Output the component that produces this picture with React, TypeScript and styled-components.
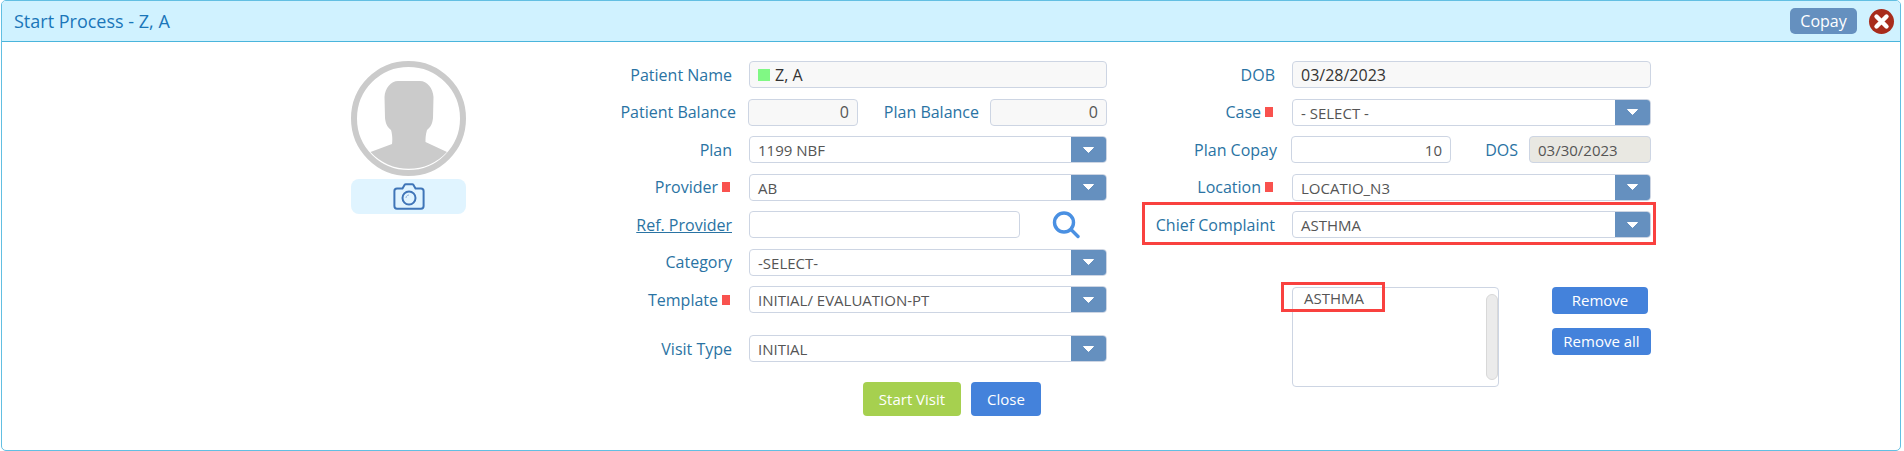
import React from "react";
import styled, { createGlobalStyle } from "styled-components";

const GlobalStyle = createGlobalStyle`
  html, body {
    margin: 0;
    padding: 0;
    background: #fff;
    font-family: "Open Sans", "Noto Sans", sans-serif;
    font-size: 14px;
  }
`;

function Dropdown({ value }: { value: string }) {
  return (
    <SelectBox>
      <SelectValue>{value}</SelectValue>
      <SelectArrow>
        <svg width="11" height="6" viewBox="0 0 11 6">
          <path d="M0.5 0.5h10L5.5 5.5z" fill="#fff" stroke="#fff" strokeLinejoin="round" />
        </svg>
      </SelectArrow>
    </SelectBox>
  );
}

export default function App() {
  return (
    <>
      <GlobalStyle />
      <Modal>
        <Header>
          <Title>Start Process - Z, A</Title>
          <CopayButton>Copay</CopayButton>
          <CloseIcon width="27" height="27" viewBox="0 0 27 27">
            <circle cx="13.5" cy="13.5" r="12.5" fill="#a82c1c" />
            <path d="M8.5 8.5l10 10M18.5 8.5l-10 10" stroke="#fff" strokeWidth="4.4" strokeLinecap="round" />
          </CloseIcon>
        </Header>

        <Body>
          <PhotoColumn>
            <svg width="115" height="115" viewBox="0 0 115 115">
              <circle cx="57.5" cy="57.5" r="54.5" fill="none" stroke="#cbcbcb" strokeWidth="6" />
              <path
                d="M19.5 91 L41 83 C41.5 79 41.5 74 40 69 C36 66 34.500 62 34 57 L33.500 36 C34 27 40 20 47 20 L69 20 C76 20 82 27 82.500 36 L82 57 C81.500 62 80 66 76 69 C74.500 74 74.500 78 74.500 81 L96 91 A52 52 0 0 1 19.5 91 Z"
                fill="#cbcbcb"
              />
            </svg>
            <PhotoButton>
              <svg width="32" height="27" viewBox="0 0 32 27" fill="none" stroke="#3f75b8" strokeWidth="2">
                <path
                  d="M4 5.5h5.5l2-3.5c.3-.5.7-.8 1.3-.8h6.4c.6 0 1 .3 1.3.8l2 3.5H28c1.5 0 2.6 1.1 2.6 2.6v15c0 1.5-1.1 2.6-2.6 2.6H4c-1.5 0-2.6-1.1-2.6-2.6v-15C1.4 6.6 2.5 5.500 4 5.500z"
                  strokeLinejoin="round"
                />
                <circle cx="16" cy="15" r="6.500" />
                <path d="M13 15c0-1.700 1.300-3 3-3" strokeWidth="1" stroke="#8fb2dc" />
              </svg>
            </PhotoButton>
          </PhotoColumn>

          <LeftForm>
            <Row>
              <Label>Patient Name</Label>
              <ReadOnlyBox>
                <StatusSwatch />
                Z, A
              </ReadOnlyBox>
            </Row>
            <Row>
              <BalanceLabel>Patient Balance</BalanceLabel>
              <BalanceBox $width={110}>0</BalanceBox>
              <InlineLabel $width={132}>Plan Balance</InlineLabel>
              <BalanceBox $width={117}>0</BalanceBox>
            </Row>
            <Row>
              <Label>Plan</Label>
              <Dropdown value="1199 NBF" />
            </Row>
            <Row>
              <RequiredLabel>
                Provider<Required />
              </RequiredLabel>
              <Dropdown value="AB" />
            </Row>
            <Row>
              <Label>
                <RefLink>Ref. Provider</RefLink>
              </Label>
              <RefInput />
              <SearchIcon width="28" height="28" viewBox="0 0 28 28" fill="none" stroke="#4a90e2" strokeLinecap="round">
                <circle cx="12" cy="11.500" r="9.500" strokeWidth="3.400" />
                <path d="M19 18.500L26 25.500" strokeWidth="3.400" />
              </SearchIcon>
            </Row>
            <Row>
              <Label>Category</Label>
              <Dropdown value="-SELECT-" />
            </Row>
            <Row $height={49}>
              <RequiredLabel>
                Template<Required />
              </RequiredLabel>
              <Dropdown value="INITIAL/ EVALUATION-PT" />
            </Row>
            <Row $height={47}>
              <Label>Visit Type</Label>
              <Dropdown value="INITIAL" />
            </Row>
            <ActionRow>
              <ActionButton $color="#a6d04f" $width={98}>Start Visit</ActionButton>
              <ActionButton $color="#4482db" $width={70}>Close</ActionButton>
            </ActionRow>
          </LeftForm>

          <RightForm>
            <Row>
              <RightLabel>DOB</RightLabel>
              <ReadOnlyBox>03/28/2023</ReadOnlyBox>
            </Row>
            <Row>
              <RightRequiredLabel>
                Case<Required />
              </RightRequiredLabel>
              <Dropdown value="- SELECT -" />
            </Row>
            <Row>
              <CopayLabel>Plan Copay</CopayLabel>
              <CopayBox>10</CopayBox>
              <InlineLabel $width={78}>DOS</InlineLabel>
              <DosBox>03/30/2023</DosBox>
            </Row>
            <Row>
              <RightRequiredLabel>
                Location<Required />
              </RightRequiredLabel>
              <Dropdown value="LOCATIO_N3" />
            </Row>
            <ComplaintRow>
              <RightLabel>Chief Complaint</RightLabel>
              <Dropdown value="ASTHMA" />
            </ComplaintRow>
            <ListArea>
              <ListBox>
                <ListItem>ASTHMA</ListItem>
                <ListScrollbar />
              </ListBox>
              <ListActions>
                <SmallButton $width={96}>Remove</SmallButton>
                <SmallButton $width={99}>Remove all</SmallButton>
              </ListActions>
            </ListArea>
          </RightForm>
        </Body>
      </Modal>
    </>
  );
}

const Modal = styled.div`
  box-sizing: border-box;
  width: 1900px;
  height: 451px;
  margin-left: 1px;
  border: 1px solid #62bfe2;
  border-radius: 5px;
  overflow: hidden;
`;

const Header = styled.header`
  box-sizing: border-box;
  height: 41px;
  display: flex;
  align-items: center;
  padding: 0 5px 0 12px;
  background: #d0f2ff;
  border-bottom: 1px solid #4ab5dc;
`;

const Title = styled.h1`
  flex: 1;
  margin: 0;
  font-size: 18px;
  font-weight: 400;
  color: #1a76b9;
`;

const CopayButton = styled.button`
  box-sizing: border-box;
  width: 67px;
  height: 26px;
  margin-right: 11px;
  padding: 0;
  border: 0;
  border-radius: 5px;
  background: #6590bf;
  color: #fff;
  font: 400 16px "Open Sans", sans-serif;
`;

const CloseIcon = styled.svg`
  display: block;
`;

const Body = styled.main`
  display: flex;
  align-items: flex-start;
  padding: 19px 0 0 349px;
`;

const PhotoColumn = styled.div`
  flex: none;
  width: 115px;
  margin-right: 134px;
  display: flex;
  flex-direction: column;
  gap: 3px;

  svg {
    display: block;
  }
`;

const PhotoButton = styled.div`
  height: 35px;
  display: flex;
  align-items: center;
  justify-content: center;
  border-radius: 8px;
  background: #e0f4ff;
`;

const LeftForm = styled.section`
  flex: none;
  width: 507px;
  margin-right: 13px;
`;

const RightForm = styled.section`
  flex: none;
  width: 531px;
`;

const Row = styled.div<{ $height?: number }>`
  height: ${(p) => p.$height ?? 37.5}px;
  display: flex;
  align-items: flex-start;
`;

const Label = styled.label`
  box-sizing: border-box;
  flex: none;
  width: 149px;
  height: 27px;
  padding-right: 17px;
  display: flex;
  align-items: center;
  justify-content: flex-end;
  color: #2a73a3;
  font-size: 16px;
  white-space: nowrap;
`;

const BalanceLabel = styled(Label)`
  width: 148px;
  padding-right: 12px;
`;

const RequiredLabel = styled(Label)`
  padding-right: 19px;
`;

const RightLabel = styled(Label)`
  width: 172px;
`;

const RightRequiredLabel = styled(RightLabel)`
  padding-right: 19px;
`;

const CopayLabel = styled(Label)`
  width: 171px;
  padding-right: 14px;
`;

const InlineLabel = styled(Label)<{ $width: number }>`
  width: ${(p) => p.$width}px;
  padding-right: 11px;
`;

const Required = styled.span`
  width: 8px;
  height: 10px;
  margin-left: 4px;
  background: #f9524e;
`;

const RefLink = styled.a`
  color: #2a73a3;
  text-decoration: underline;
`;

const ReadOnlyBox = styled.div`
  box-sizing: border-box;
  flex: 1;
  height: 27px;
  padding: 0 8px;
  display: flex;
  align-items: center;
  border: 1px solid #cdd5e3;
  border-radius: 4px;
  background: #f8f8f8;
  color: #333;
  font-size: 16px;
`;

const StatusSwatch = styled.span`
  width: 12px;
  height: 12px;
  margin-right: 5px;
  background: #80f884;
`;

const BalanceBox = styled(ReadOnlyBox)<{ $width: number }>`
  flex: none;
  width: ${(p) => p.$width}px;
  justify-content: flex-end;
  color: #555;
`;

const SelectBox = styled.div`
  box-sizing: border-box;
  flex: 1;
  height: 27px;
  display: flex;
  align-items: stretch;
  border: 1px solid #cdd5e3;
  border-radius: 4px;
  background: #fff;
  overflow: hidden;
`;

const SelectValue = styled.span`
  flex: 1;
  padding: 1px 8px 0;
  display: flex;
  align-items: center;
  color: #555;
  font-size: 15px;
`;

const SelectArrow = styled.span`
  width: 35px;
  display: flex;
  align-items: center;
  justify-content: center;
  background: #6590bf;
`;

const RefInput = styled.input`
  box-sizing: border-box;
  width: 271px;
  height: 27px;
  padding: 0 8px;
  border: 1px solid #cdd5e3;
  border-radius: 4px;
  background: #fff;
`;

const SearchIcon = styled.svg`
  margin-left: 32px;
`;

const ActionRow = styled.div`
  display: flex;
  gap: 10px;
  padding-left: 263px;
`;

const ActionButton = styled.button<{ $color: string; $width: number }>`
  width: ${(p) => p.$width}px;
  height: 34px;
  padding: 0;
  border: 0;
  border-radius: 4px;
  background: ${(p) => p.$color};
  color: #fff;
  font: 400 15px "Open Sans", sans-serif;
`;

const CopayBox = styled(BalanceBox).attrs({ $width: 160 })`
  background: #fff;
  font-size: 15px;
`;

const DosBox = styled(ReadOnlyBox)`
  flex: none;
  width: 122px;
  padding: 1px 8px 0;
  background: #e9e8e2;
  color: #555;
  font-size: 15px;
`;

const ComplaintRow = styled(Row)`
  position: relative;

  &::after {
    content: "";
    position: absolute;
    left: 22px;
    top: -9px;
    right: -5px;
    height: 43px;
    box-sizing: border-box;
    border: 3px solid #f9413f;
    pointer-events: none;
  }
`;

const ListArea = styled.div`
  display: flex;
  align-items: flex-start;
  margin-top: 38px;
  padding-left: 172px;
`;

const ListBox = styled.div`
  box-sizing: border-box;
  flex: none;
  position: relative;
  width: 207px;
  height: 100px;
  margin-right: 53px;
  border: 1px solid #cdd5e3;
  border-radius: 4px;
  background: #fff;
`;

const ListItem = styled.div`
  padding: 0 0 0 11px;
  color: #555;
  font-size: 15px;
  line-height: 20px;

  &::after {
    content: "";
    position: absolute;
    left: -12px;
    top: -6px;
    width: 104px;
    height: 30px;
    box-sizing: border-box;
    border: 3px solid #f9413f;
  }
`;

const ListScrollbar = styled.div`
  position: absolute;
  top: 6px;
  right: 0;
  width: 12px;
  height: 86px;
  box-sizing: border-box;
  border: 1px solid #d8d8d8;
  border-radius: 6px;
  background: #ebebeb;
`;

const ListActions = styled.div`
  display: flex;
  flex-direction: column;
  align-items: flex-start;
  gap: 14px;
`;

const SmallButton = styled.button<{ $width: number }>`
  width: ${(p) => p.$width}px;
  height: 27px;
  padding: 0;
  border: 0;
  border-radius: 4px;
  background: #4482db;
  color: #fff;
  font: 400 15px "Open Sans", sans-serif;
`;
